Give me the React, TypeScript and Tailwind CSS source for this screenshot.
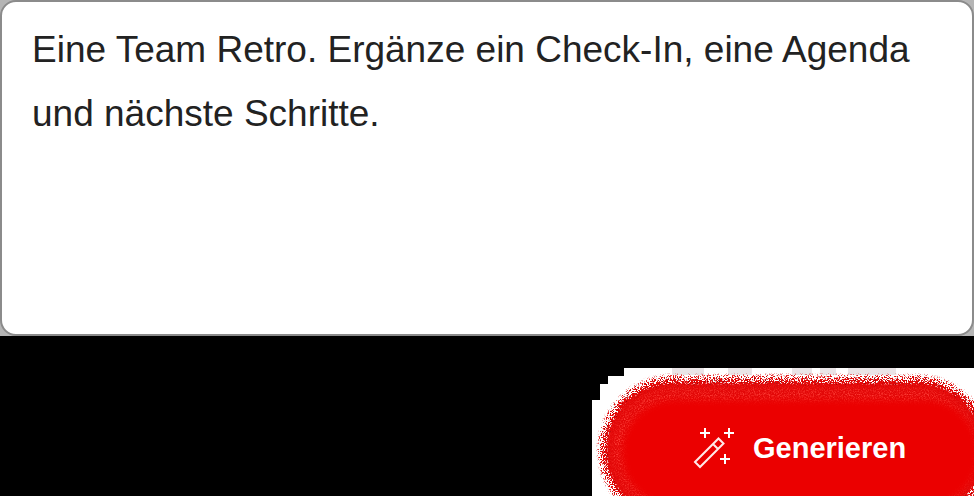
import React, { useState } from "react";

function WandIcon() {
  return (
    <svg width="42" height="42" viewBox="0 0 42 42" fill="none" stroke="#fff" strokeWidth="2" aria-hidden="true" className="shrink-0">
      <path d="M12 1v10M7 6h10M36 1v10M31 6h10M32 27v10M27 32h10" />
      <path d="M2 35 25.500 11.500l5 5L7 40ZM20 17l5 5" stroke="#ffe9e8" />
    </svg>
  );
}

function Glow() {
  return (
    <svg
      className="pointer-events-none absolute inset-0 h-full w-full"
      viewBox="0 0 382 128"
      preserveAspectRatio="xMaxYMin slice"
      aria-hidden="true"
    >
      <defs>
        <filter id="dissolve" filterUnits="userSpaceOnUse" x="-20" y="-20" width="440" height="220" colorInterpolationFilters="sRGB">
          <feGaussianBlur in="SourceGraphic" stdDeviation="6" result="soft" />
          <feTurbulence type="fractalNoise" baseFrequency="0.97" numOctaves="3" seed="4" />
          <feColorMatrix values="0 0 0 0 0  0 0 0 0 0  0 0 0 0 0  4 0 0 0 -1.500" result="noise" />
          <feComposite in="soft" in2="noise" operator="arithmetic" k2="1.700" k3="1" k4="-1.150" />
          <feColorMatrix values="0 0 0 0 0.890  0 0 0 0 0.030  0 0 0 0 0.030  0 0 0 4 0" />
        </filter>
        <filter id="grain" filterUnits="userSpaceOnUse" x="0" y="0" width="400" height="180" colorInterpolationFilters="sRGB">
          <feTurbulence type="fractalNoise" baseFrequency="0.8" numOctaves="2" seed="9" />
          <feColorMatrix values="0 0 0 0 1  0 0 0 0 0.250  0 0 0 0 0.220  3 0 0 0 -1.300" result="speckle" />
          <feGaussianBlur in="SourceGraphic" stdDeviation="4" result="area" />
          <feComposite in="speckle" in2="area" operator="in" />
        </filter>
        <filter id="shade" filterUnits="userSpaceOnUse" x="0" y="0" width="400" height="180" colorInterpolationFilters="sRGB">
          <feTurbulence type="fractalNoise" baseFrequency="0.9" numOctaves="2" seed="21" />
          <feColorMatrix values="0 0 0 0 0.450  0 0 0 0 0  0 0 0 0 0.030  6 0 0 0 -3.800" result="speckle" />
          <feGaussianBlur in="SourceGraphic" stdDeviation="2" result="area" />
          <feComposite in="speckle" in2="area" operator="in" />
        </filter>
        <filter id="soften" filterUnits="userSpaceOnUse" x="0" y="0" width="400" height="180">
          <feGaussianBlur stdDeviation="3" />
        </filter>
      </defs>
      <path d="M0 128V32h8V16h8V8h16V0h350v128Z" fill="#fff" />
      <path d="M80 0h32v7H80ZM136 0h24v7h-24ZM200 0h20v7h-20ZM228 0h16v7h-16ZM256 0h48v7h-48Z" fill="#e9e4e6" />
      <rect x="11" y="12" width="384" height="140" rx="69" fill="#e80000" filter="url(#dissolve)" />
      <rect x="19" y="20" width="368" height="124" rx="62" fill="#e80000" filter="url(#grain)" />
      <rect x="12" y="13" width="382" height="138" rx="67" fill="none" stroke="#000" strokeWidth="9" filter="url(#shade)" />
      <rect x="30" y="32" width="356" height="106" rx="53" fill="#eb0000" filter="url(#soften)" />
    </svg>
  );
}

export default function App() {
  const [prompt, setPrompt] = useState(
    "Eine Team Retro. Ergänze ein Check-In, eine Agenda und nächste Schritte."
  );
  return (
    <main className="min-h-screen bg-black font-['Liberation_Sans',Arial,sans-serif]">
      <div className="bg-[#b5b5b5]">
        <textarea
          aria-label="Prompt"
          value={prompt}
          onChange={(e) => setPrompt(e.target.value)}
          spellCheck={false}
          className="block h-84 w-full resize-none overflow-hidden rounded-2xl border-2 border-[#8b8b8b] bg-white px-7.5 py-4 text-[37px]/16 text-[#222] outline-none"
        />
      </div>
      <div className="flex justify-end overflow-hidden pt-8">
        <div className="relative h-32 w-[382px] overflow-hidden pl-8 pt-8">
          <Glow />
          <button
            type="button"
            className="relative flex h-24 w-full items-center gap-4.5 rounded-full pl-[69px] text-[29px]/8 font-bold text-white"
          >
            <WandIcon />
            Generieren
          </button>
        </div>
      </div>
    </main>
  );
}
